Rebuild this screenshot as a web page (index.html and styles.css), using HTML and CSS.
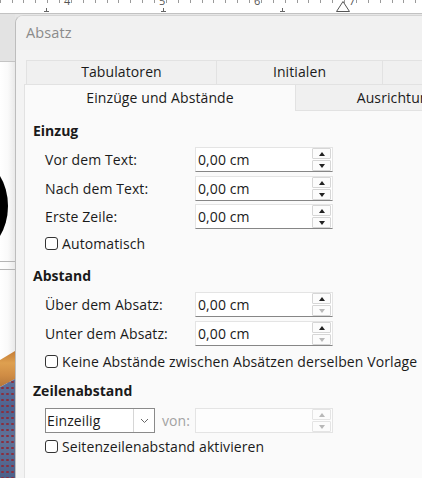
FILE: index.html
```html
<!DOCTYPE html>
<html lang="de">
<head>
<meta charset="utf-8">
<title>Absatz</title>
<link rel="stylesheet" href="styles.css">
</head>
<body>
<div class="screen">
  <div class="ruler">
    <div class="scale">
      <div class="cm"><span class="num">4</span><span class="stop s1"></span></div>
      <div class="cm"><span class="num">5</span><span class="stop"></span></div>
      <div class="cm"><span class="num">6</span><span class="stop s2"></span></div>
      <div class="cm"><span class="num">7</span></div>
    </div>
    <svg class="indent" width="16" height="13" viewBox="0 0 16 13"><path d="M1.5 11.5 L8 1.5 L14.5 11.5 Z" fill="#fff" stroke="#555" stroke-width="1"/></svg>
  </div>
  <div class="workspace">
    <div class="doc">
      <div class="doc-gap"></div>
      <div class="doc-page">
        <div class="glyph"></div>
        <div class="rule"></div>
        <div class="rule second"></div>
        <div class="photo">
          <div class="wood"></div>
          <div class="fabric"></div>
        </div>
      </div>
    </div>
    <div class="dialog">
      <div class="titlebar">Absatz</div>
      <div class="dialog-body">
        <div class="tabrow back">
          <div class="tab t-tab">Tabulatoren</div>
          <div class="tab t-init">Initialen</div>
          <div class="tab t-more"></div>
        </div>
        <div class="tabrow front">
          <div class="tab selected">Einzüge und Abstände</div>
          <div class="tab t-ausr">Ausrichtung</div>
        </div>
        <div class="page">
          <div class="heading">Einzug</div>
          <div class="field f1">
            <span class="label">Vor dem Text:</span>
            <div class="spin"><span class="val">0,00 cm</span><span class="btns"><span class="sbtn"><i class="up"></i></span><span class="sbtn"><i class="down"></i></span></span></div>
          </div>
          <div class="field f2">
            <span class="label">Nach dem Text:</span>
            <div class="spin"><span class="val">0,00 cm</span><span class="btns"><span class="sbtn"><i class="up"></i></span><span class="sbtn"><i class="down"></i></span></span></div>
          </div>
          <div class="field f3">
            <span class="label">Erste Zeile:</span>
            <div class="spin"><span class="val">0,00 cm</span><span class="btns"><span class="sbtn"><i class="up"></i></span><span class="sbtn"><i class="down"></i></span></span></div>
          </div>
          <div class="check c-auto"><span class="box"></span>Automatisch</div>

          <div class="heading h-abstand">Abstand</div>
          <div class="field f1">
            <span class="label">Über dem Absatz:</span>
            <div class="spin"><span class="val">0,00 cm</span><span class="btns"><span class="sbtn"><i class="up"></i></span><span class="sbtn"><i class="down off"></i></span></span></div>
          </div>
          <div class="field f2">
            <span class="label">Unter dem Absatz:</span>
            <div class="spin"><span class="val">0,00 cm</span><span class="btns"><span class="sbtn"><i class="up"></i></span><span class="sbtn"><i class="down off"></i></span></span></div>
          </div>
          <div class="check c-keine"><span class="box"></span>Keine Abstände zwischen Absätzen derselben Vorlage</div>

          <div class="heading h-zeile">Zeilenabstand</div>
          <div class="field f-zeile">
            <div class="combo"><span class="val">Einzeilig</span><span class="cbtn"><svg width="9" height="6" viewBox="0 0 9 6"><path d="M1 1 L4.5 4.5 L8 1" fill="none" stroke="#666" stroke-width="1"/></svg></span></div>
            <span class="von">von:</span>
            <div class="spin disabled"><span class="val"></span><span class="btns"><span class="sbtn"><i class="up off"></i></span><span class="sbtn"><i class="down off"></i></span></span></div>
          </div>
          <div class="check c-seiten"><span class="box"></span>Seitenzeilenabstand aktivieren</div>
        </div>
      </div>
    </div>
  </div>
</div>
</body>
</html>
```
FILE: styles.css
```css
html, body {
  margin: 0;
  padding: 0;
}
body {
  width: 422px;
  height: 478px;
  overflow: hidden;
  background: #e6e6e6;
  font-family: "Open Sans", "Noto Sans", sans-serif;
  font-size: 14px;
  letter-spacing: 0.1px;
  color: #1a1a1a;
}
.screen {
  width: 422px;
  height: 478px;
  overflow: hidden;
}

/* ruler */
.ruler {
  position: relative;
  height: 14px;
  box-sizing: border-box;
  background: #fff;
  border-bottom: 1px solid #c2c2c2;
  overflow: hidden;
}
.scale {
  display: flex;
  margin-left: -27px;
  height: 13px;
  background-image: repeating-linear-gradient(90deg, #9a9a9a 0 1px, transparent 1px 11.875px);
  background-size: 100% 3px;
  background-repeat: no-repeat;
  background-position: 3px 0;
}
.cm {
  position: relative;
  flex: none;
  width: 95px;
  height: 13px;
}
.num {
  position: absolute;
  left: 90px;
  top: -5px;
  font-size: 11px;
  line-height: 12px;
  color: #555;
  background: #fff;
  padding: 0 1px;
}
.stop {
  position: absolute;
  left: 93px;
  top: 8px;
  width: 5px;
  height: 3px;
  border-bottom: 1px solid #666;
}
.stop::after {
  content: "";
  position: absolute;
  left: 2px;
  top: 0;
  width: 1px;
  height: 4px;
  background: #666;
}
.stop.s1 { left: 71px; }
.stop.s2 { left: 117px; }
.indent {
  position: absolute;
  left: 335px;
  top: 0;
}

/* workspace */
.workspace {
  display: flex;
  height: 464px;
}
.doc {
  flex: none;
  width: 15px;
  display: flex;
  flex-direction: column;
}
.doc-gap {
  flex: none;
  height: 47px;
  background: #e3e3e3;
  border-bottom: 1px solid #c4c4c4;
}
.doc-page {
  flex: 1;
  background: linear-gradient(90deg, #fff 0, #fafafa 8px, #e9e9e9 15px);
  overflow: hidden;
}
.glyph {
  width: 60px;
  height: 88px;
  margin-top: 100px;
  margin-left: -52px;
  background: #000;
  border-radius: 50%;
}
.rule {
  height: 1px;
  margin-top: 11px;
  background: #b5b5b5;
}
.rule.second {
  margin-top: 7px;
}
.photo {
  margin-top: 81px;
}
.wood {
  height: 36px;
  background: linear-gradient(180deg, #c47c36 0, #dea050 12px, #d08d45 24px, #b4763a 36px);
  clip-path: polygon(0 9px, 100% 0, 100% 28px, 0 36px);
}
.fabric {
  height: 110px;
  margin-top: -8px;
  background:
    radial-gradient(circle at 50% 50%, #8a2e3e 0 1px, transparent 1.5px) 0 0 / 5px 6px,
    linear-gradient(180deg, #5f719a 0, #4d6390 30px, #607399 60px, #465a86 110px);
  clip-path: polygon(0 8px, 100% 0, 100% 100%, 0 100%);
}

/* dialog */
.dialog {
  flex: 1;
  margin-top: 1px;
  background: #f3f3f3;
  border-left: 1px solid #bdbdbd;
  border-top: 1px solid #d4d4d4;
  border-top-left-radius: 8px;
  overflow: hidden;
  min-width: 0;
}
.titlebar {
  height: 34px;
  line-height: 34px;
  padding-left: 10px;
  background: #f1f1f1;
  color: #8b8b8b;
  font-size: 14.5px;
}
.dialog-body {
  padding: 10px 0 0 8px;
  background: #f3f3f3;
  height: 420px;
}
.tabrow {
  display: flex;
  white-space: nowrap;
}
.tabrow.back {
  height: 24px;
  margin-left: 2px;
}
.tabrow.front {
  height: 27px;
}
.tab {
  flex: none;
  box-sizing: border-box;
  border: 1px solid #e2e2e2;
  background: #f0f0f0;
  text-align: center;
}
.back .tab {
  line-height: 22px;
  border-bottom: none;
  margin-right: -1px;
}
.t-tab { width: 191px; }
.t-init { width: 167px; }
.t-more { width: 80px; }
.front .tab {
  line-height: 26px;
}
.tab.selected {
  width: 272px;
  background: #fafafa;
  border-bottom: none;
}
.t-ausr {
  width: 202px;
  border-left: none;
}

/* page */
.page {
  background: #fafafa;
  border-left: 1px solid #e2e2e2;
  padding: 10px 0 0 8px;
  height: 400px;
}
.heading {
  height: 20px;
  line-height: 20px;
  font-weight: 700;
  letter-spacing: 0;
}
.h-abstand { margin-top: 13px; }
.h-zeile { margin-top: 10px; }
.field {
  display: flex;
  align-items: center;
  height: 25px;
  padding-left: 12px;
  margin-top: 4px;
}
.field.f1 { margin-top: 6px; }
.field.f3 { margin-top: 3px; }
.field.f-zeile { margin-top: 7px; }
.label {
  flex: none;
  width: 150px;
}
.spin {
  flex: none;
  display: flex;
  width: 138px;
  height: 25px;
  box-sizing: border-box;
  border: 1px solid #e4e4e4;
  border-bottom-color: #868686;
  background: #fff;
}
.spin .val {
  flex: 1;
  padding-left: 2px;
  line-height: 23px;
}
.btns {
  flex: none;
  width: 19px;
  margin-right: 1px;
  display: flex;
  flex-direction: column;
  gap: 1px;
}
.sbtn {
  height: 11px;
  box-sizing: border-box;
  border: 1px solid #d6d6d6;
  border-radius: 1px;
  background: #fcfcfc;
  display: flex;
  align-items: center;
  justify-content: center;
}
.up, .down {
  width: 0;
  height: 0;
  border-left: 3.5px solid transparent;
  border-right: 3.5px solid transparent;
}
.up { border-bottom: 4px solid #222; }
.down { border-top: 4px solid #222; }
.up.off { border-bottom-color: #b8b8b8; }
.down.off { border-top-color: #b8b8b8; }
.spin.disabled {
  border-bottom-color: #e4e4e4;
  background: #fdfdfd;
}
.spin.disabled .sbtn {
  border-color: #e4e4e4;
}
.check {
  display: flex;
  align-items: center;
  height: 20px;
  padding-left: 12px;
  white-space: nowrap;
}
.c-auto { margin-top: 4px; }
.c-keine { margin-top: 5px; }
.c-seiten { margin-top: 3px; }
.box {
  flex: none;
  width: 13px;
  height: 13px;
  box-sizing: border-box;
  border: 1px solid #333;
  border-radius: 3px;
  background: #fff;
  margin-right: 4px;
}
.combo {
  flex: none;
  display: flex;
  width: 110px;
  height: 25px;
  box-sizing: border-box;
  border: 1px solid #8a8a8a;
  background: #fff;
}
.combo .val {
  flex: 1;
  padding-left: 1px;
  line-height: 23px;
}
.cbtn {
  flex: none;
  width: 20px;
  border-left: 1px solid #d6d6d6;
  display: flex;
  align-items: center;
  justify-content: center;
}
.von {
  flex: none;
  width: 33px;
  margin-left: 7px;
  color: #a2a2a2;
}
```
